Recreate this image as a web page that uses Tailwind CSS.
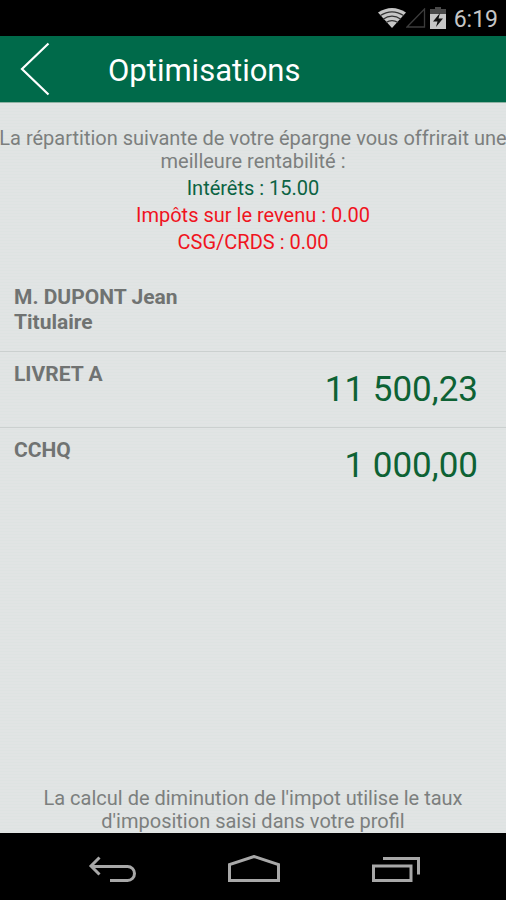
<!DOCTYPE html>
<html lang="fr">
<head>
  <meta charset="UTF-8" />
  <meta name="viewport" content="width=device-width, initial-scale=1.0" />
  <title>Optimisations</title>
  <script src="https://cdn.jsdelivr.net/npm/@tailwindcss/browser@4"></script>
</head>
<body class="flex min-h-screen flex-col bg-[#e0e4e3] bg-[repeating-linear-gradient(180deg,#dee3e2_0px_1px,#e1e4e4_1px_3px)] font-['Roboto',sans-serif] text-xl text-[#7c7f7e]">

  <!-- Status Bar -->
  <div class="flex h-9 items-center justify-end bg-black pr-2 text-[#c6c6c6]">
    <svg class="h-5 w-7" viewBox="0 0 28 20" fill="none">
      <path d="M0 4.500Q14-4.500 28 4.500L14 20Z" fill="#c6c6c6" />
      <path d="M2 7.800Q14 0 26 7.800M5 11.200Q14 5 23 11.200M8 14.600Q14 10.500 20 14.600" stroke="#333" stroke-width="1.200" />
    </svg>
    <svg class="h-5 w-5" viewBox="0 0 20 20" fill="none">
      <path d="M1 19L18.500 1V19Z" stroke="#3c3c3c" stroke-width="1.300" />
    </svg>
    <svg class="ml-1 h-6 w-4" viewBox="0 0 16 24">
      <path d="M5 1H11V3H16V8H0V3H5Z" fill="#4a4a4a" />
      <path d="M0 8H16V23H0Z" fill="#c6c6c6" />
      <path d="M10 7L3 15.500H7.500L6 21L13 12.500H8.500Z" fill="#111" />
    </svg>
    <span class="ml-2 pt-1 text-[23px]">6:19</span>
  </div>

  <!-- Header -->
  <header class="flex h-[67px] items-center border-b border-[#8fb3a4] bg-[#006a4a] text-white">
    <button type="button" aria-label="Retour" class="flex h-full w-[108px] items-center pl-5">
      <svg class="h-[54px] w-[30px]" viewBox="0 0 30 54" fill="none" stroke="currentColor" stroke-width="2.200">
        <path d="M28.500 1.500L2 27L28.500 52.500" />
      </svg>
    </button>
    <h1 class="pt-1 text-[31px]">Optimisations</h1>
  </header>

  <main class="flex grow flex-col overflow-x-clip">
    <!-- Summary -->
    <section class="-mx-1 pt-6 text-center">
      <p class="leading-[23px]">La répartition suivante de votre épargne vous offrirait une meilleure rentabilité :</p>
      <p class="pt-1 leading-[23px] text-[#0b6343]">Intérêts : 15.00</p>
      <p class="pt-1 leading-[23px] text-[#f0141e]">Impôts sur le revenu : 0.00</p>
      <p class="pt-1 leading-[23px] text-[#f0141e]">CSG/CRDS : 0.00</p>
    </section>

    <!-- Accounts -->
    <section class="pt-[31px] text-[21px] font-bold text-[#707372]">
      <h2 class="px-[14px] pb-4 leading-[25px]">M. DUPONT Jean<br />Titulaire</h2>
      <ul>
        <li class="flex h-[76px] justify-between border-t border-[#cbd0cf] pr-7 pl-[14px]">
          <span class="pt-2 leading-7">LIVRET A</span>
          <span class="pt-4 text-[35px] leading-[44px] font-normal text-[#0d6234]">11 500,23</span>
        </li>
        <li class="flex h-[76px] justify-between border-t border-[#cbd0cf] pr-7 pl-[14px]">
          <span class="pt-2 leading-7">CCHQ</span>
          <span class="pt-4 text-[35px] leading-[44px] font-normal text-[#0d6234]">1 000,00</span>
        </li>
      </ul>
    </section>

    <p class="mt-auto px-10 text-center leading-[23px]">La calcul de diminution de l'impot utilise le taux d'imposition saisi dans votre profil</p>
  </main>

  <!-- Navigation Bar -->
  <nav class="flex h-[67px] items-center justify-between bg-black pt-1 pr-[86px] pl-[88px] text-[#a8a8a8]">
    <button type="button" aria-label="Précédent">
      <svg class="h-7 w-12" viewBox="0 0 48 28" fill="none" stroke="currentColor" stroke-width="3">
        <path d="M11.500 2.500L3 11L11.500 19.500M3 11.500H39.500A7 7 0 0 1 39.500 25.500H22" />
      </svg>
    </button>
    <button type="button" aria-label="Accueil">
      <svg class="h-7 w-13" viewBox="0 0 52 28" fill="none" stroke="currentColor" stroke-width="3">
        <path d="M1.500 25.500V9.500L26 1.500L50.500 9.500V25.500Z" />
      </svg>
    </button>
    <button type="button" aria-label="Applications récentes">
      <svg class="h-7 w-12" viewBox="0 0 48 28" fill="none" stroke="currentColor" stroke-width="3">
        <path d="M1.500 11H39V25.500H1.500ZM11 3.500H46.500V19.500" />
      </svg>
    </button>
  </nav>

</body>
</html>
